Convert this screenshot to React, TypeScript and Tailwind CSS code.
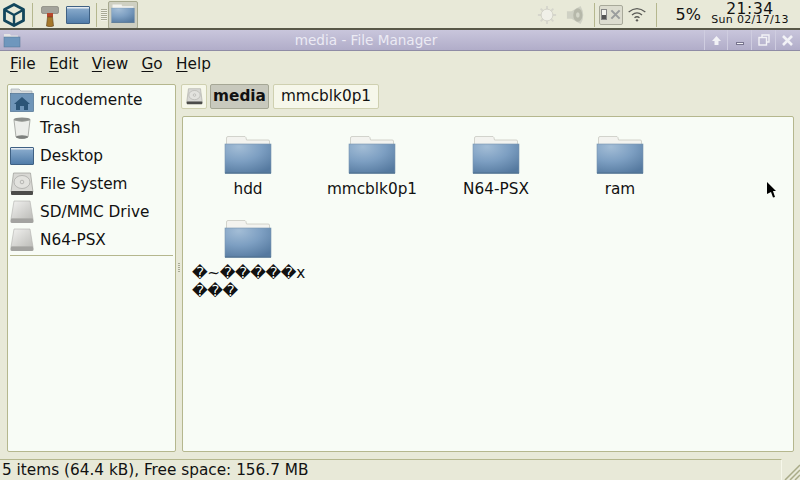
const FolderIcon = ({ size = 48 }: { size?: number }) => (
  <svg className="shrink-0" width={size} height={size} viewBox="0 0 48 48">
    <defs>
      <radialGradient id="fb" cx="0.3" cy="0.1" r="1">
        <stop offset="0" stopColor="#a3bdd6" />
        <stop offset="0.5" stopColor="#7d9fc2" />
        <stop offset="1" stopColor="#55799f" />
      </radialGradient>
    </defs>
    <path d="M2.500 10 V4 Q2.500 2.500 4 2.500 H21 Q22 2.500 22.500 6 H44 Q45.500 6 45.500 7 V12 H2.500 Z" fill="#f3f3ef" stroke="#c9c9c1" strokeWidth="0.8" />
    <rect x="1" y="10" width="46" height="29" fill="url(#fb)" stroke="#7894ae" strokeWidth="0.6" />
    <rect x="1" y="38.500" width="46" height="1.200" fill="#466a8c" />
  </svg>
);

const HomeIcon = () => (
  <svg width="24" height="24" viewBox="0 0 24 24">
    <path d="M1 8 V1 H9 L11 3 H22 V8 Z" fill="#d7dbdc" stroke="#a5adb2" strokeWidth="0.7" />
    <rect x="0.500" y="5.500" width="23" height="18" fill="#6f95b8" stroke="#4d7090" strokeWidth="0.7" />
    <path d="M12 9 L20 16 H18 V22 H14 V18 H10 V22 H6 V16 H4 Z" fill="#2c5577" />
  </svg>
);

const TrashIcon = () => (
  <svg width="24" height="24" viewBox="0 0 24 24">
    <ellipse cx="12" cy="3.500" rx="8.500" ry="2" fill="#8b8f8c" />
    <path d="M4 4 L6 21 Q12 24 18 21 L20 4 Q12 7 4 4 Z" fill="#eceeea" stroke="#9a9d98" strokeWidth="0.8" />
    <ellipse cx="12" cy="21" rx="6" ry="1.800" fill="#7d807d" />
  </svg>
);

const DesktopIcon = ({ size = 24, id = "db" }: { size?: number; id?: string }) => (
  <svg width={size} height={size} viewBox="0 0 24 24">
    <defs>
      <linearGradient id={id} x1="0" y1="0" x2="0" y2="1">
        <stop offset="0" stopColor="#8fb0d0" />
        <stop offset="1" stopColor="#4f7ba8" />
      </linearGradient>
    </defs>
    <rect x="0.500" y="3.500" width="23" height="17" rx="0.500" fill={`url(#${id})`} stroke="#3f6184" />
    <rect x="1" y="4" width="22" height="1.500" fill="#e4eaf0" />
  </svg>
);

const HarddiskIcon = ({ size = 24 }: { size?: number }) => (
  <svg width={size} height={size} viewBox="0 0 24 24">
    <path d="M3.500 1 H20.500 L23 20 H1 Z" fill="#d8d8d4" stroke="#9b9b96" strokeWidth="0.7" />
    <ellipse cx="12" cy="10" rx="8" ry="6.500" fill="#e2e2de" stroke="#a4a4a0" strokeWidth="0.7" />
    <circle cx="12" cy="10" r="1.800" fill="none" stroke="#a4a4a0" strokeWidth="0.7" />
    <rect x="1" y="19" width="22" height="4" rx="1" fill="#4c4c4a" />
  </svg>
);

const DriveIcon = () => (
  <svg width="24" height="24" viewBox="0 0 24 24">
    <defs>
      <linearGradient id="dr" x1="0" y1="0" x2="1" y2="1">
        <stop offset="0" stopColor="#f2f2f0" />
        <stop offset="1" stopColor="#bcbcb8" />
      </linearGradient>
    </defs>
    <path d="M4 1 H20 L23 19 H1 Z" fill="url(#dr)" stroke="#b0b0ac" strokeWidth="0.6" />
    <rect x="0.500" y="18.500" width="23" height="4.500" rx="1.500" fill="#a3a3a0" />
  </svg>
);

const places = [
  { name: "rucodemente", icon: <HomeIcon /> },
  { name: "Trash", icon: <TrashIcon /> },
  { name: "Desktop", icon: <DesktopIcon id="db2" /> },
  { name: "File System", icon: <HarddiskIcon /> },
  { name: "SD/MMC Drive", icon: <DriveIcon /> },
  { name: "N64-PSX", icon: <DriveIcon /> },
];

const menus = [
  { first: "F", rest: "ile" },
  { first: "E", rest: "dit" },
  { first: "V", rest: "iew" },
  { first: "G", rest: "o" },
  { first: "H", rest: "elp" },
];

const folders = ["hdd", "mmcblk0p1", "N64-PSX", "ram"];

const Panel = () => (
  <div className="h-[29px] flex items-center bg-[#e8e9d8] shrink-0">
    <svg className="ml-[2px]" width="24" height="26" viewBox="0 0 24 26" fill="none" stroke="#12465c" strokeWidth="2.800" strokeLinejoin="round">
      <path d="M12 2.500 L21.500 7.500 V18.500 L12 23.500 L2.500 18.500 V7.500 Z" />
      <path d="M3 8 L12 13 L21 8 M12 13 V23" strokeWidth="2.400" />
    </svg>
    <div className="ml-[6px] w-px h-[24px] bg-[#b5b78e]" />
    <svg className="ml-[8px]" width="18" height="24" viewBox="0 0 18 24">
      <rect x="0.500" y="3.500" width="17" height="7" rx="1.500" fill="#a3a39b" stroke="#77776f" strokeWidth="0.600" />
      <rect x="6" y="10" width="6" height="4" fill="#b5472c" />
      <path d="M6.500 14 H11.500 L12.500 23 Q9 24.500 5.500 23 Z" fill="#a5782b" stroke="#5e4218" strokeWidth="0.600" />
    </svg>
    <div className="ml-[7px]"><DesktopIcon size={24} /></div>
    <div className="ml-[6px] w-px h-[24px] bg-[#b5b78e]" />
    <div className="ml-[4px] w-[6px] h-[12px] bg-[repeating-linear-gradient(to_bottom,#a9aa96_0,#a9aa96_1px,#f2f2e8_1px,#f2f2e8_2px)]" />
    <div className="ml-[1px] w-[30px] h-[28px] flex items-center justify-center bg-[#cfd0c2] border border-[#a8aa90] rounded-[2px]">
      <FolderIcon size={24} />
    </div>
    <div className="ml-auto flex items-center">
      <svg width="20" height="20" viewBox="0 0 22 22">
        <g stroke="#d6d6cc" strokeWidth="2">
          <path d="M11 1 V21 M1 11 H21 M4 4 L18 18 M18 4 L4 18" />
        </g>
        <circle cx="11" cy="11" r="6.500" fill="#f0f0e8" stroke="#cfcfc5" />
      </svg>
      <svg className="ml-[9px]" width="20" height="20" viewBox="0 0 22 22">
        <path d="M1 7 H6 L16 1 Q22 11 16 21 L6 15 H1 Z" fill="#cfd1c4" />
        <ellipse cx="13" cy="11" rx="5" ry="7.500" fill="#b6b8aa" />
        <ellipse cx="13" cy="11" rx="2" ry="3" fill="#d4d6c9" />
      </svg>
      <div className="ml-[8px] w-px h-[24px] bg-[#b5b78e]" />
      <div className="ml-[4px] w-[24px] h-[20px] flex items-center justify-center gap-[3px] bg-[#dcdccf] border border-[#a8a99a] rounded-[2px]">
        <div className="w-[6px] h-[11px] border border-[#888] bg-[linear-gradient(to_bottom,#f4f4ee_50%,#555_50%)]" />
        <svg width="11" height="11" viewBox="0 0 16 16" stroke="#9a9d9d" strokeWidth="3">
          <path d="M2 2 L14 14 M14 2 L2 14" />
        </svg>
      </div>
      <svg className="ml-[4px]" width="20" height="17" viewBox="0 0 24 20" fill="none" stroke="#5a5a56" strokeWidth="1.600">
        <path d="M2 7 Q12 -1 22 7 M6 10.500 Q12 5.500 18 10.500 M9 14 Q12 11.500 15 14" />
        <circle cx="12" cy="17" r="1.400" fill="#5a5a56" stroke="none" />
      </svg>
      <div className="ml-[9px] w-px h-[24px] bg-[#b5b78e]" />
      <span className="ml-[19px] text-[16px] leading-none">5%</span>
      <div className="ml-[3px] w-[92px] mr-[4px] mb-[2px] flex flex-col items-center">
        <span className="text-[15.500px] leading-[12px] tracking-[0.6px]">21:34</span>
        <span className="text-[11px] leading-[10px] tracking-[0.3px] whitespace-nowrap">Sun 02/17/13</span>
      </div>
    </div>
  </div>
);

const TitleBar = () => (
  <div className="h-[20px] flex items-center shrink-0 border-t-2 border-[#585848] bg-[linear-gradient(to_bottom,#c9c6dc,#b1adc9)] border-b border-b-[#8f8ca5] box-content -mt-px">
    <div className="ml-[3px]">
      <svg width="18" height="16" viewBox="0 0 18 16">
        <path d="M1 5 V2 H7 L8 3.500 H15 V6 H1 Z" fill="#e4e4e4" />
        <rect x="1" y="5" width="16" height="10" fill="#6f97bd" stroke="#507392" strokeWidth="0.500" />
      </svg>
    </div>
    <div className="flex-1 text-center text-[13.600px] text-[#ecebf4] pl-[7px] pt-[1px]">media - File Manager</div>
    <div className="flex items-center h-full mr-[1px]">
      <div className="w-[23px] h-full flex items-center justify-center border-l border-[#cfcde0]">
        <svg width="11" height="11" viewBox="0 0 11 11" fill="#f2f2f6"><path d="M5.500 1 L10 6 H7.500 V10 H3.500 V6 H1 Z" /></svg>
      </div>
      <div className="w-[24px] h-full flex items-center justify-center border-l border-[#cfcde0]">
        <div className="w-[8px] h-[3px] bg-[#f2f2f6] border border-[#77748e] mt-[6px]" />
      </div>
      <div className="w-[24px] h-full flex items-center justify-center border-l border-[#cfcde0]">
        <svg width="12" height="12" viewBox="0 0 12 12" fill="none" stroke="#f2f2f6" strokeWidth="1.400"><path d="M4 3 V1 H11 V8 H8.500" /><rect x="1" y="3.500" width="7.500" height="7.500" /></svg>
      </div>
      <div className="w-[24px] h-full flex items-center justify-center border-l border-[#cfcde0]">
        <svg width="11" height="11" viewBox="0 0 11 11" stroke="#f2f2f6" strokeWidth="2.600"><path d="M1 1 L10 10 M10 1 L1 10" /></svg>
      </div>
    </div>
  </div>
);

export default function App() {
  return (
    <div className="relative w-[800px] h-[480px] overflow-hidden flex flex-col bg-[#e8e9d8] text-[#111] font-['DejaVu_Sans',sans-serif]">
      <Panel />
      <TitleBar />

      {/* menu bar */}
      <div className="h-[27px] flex items-center gap-[13.300px] pl-[10px] text-[15.300px] shrink-0">
        {menus.map((m) => (
          <span key={m.first}><span className="underline underline-offset-2">{m.first}</span>{m.rest}</span>
        ))}
      </div>

      {/* body */}
      <div className="flex-1 flex min-h-0 pl-[7px] pr-[6px] pt-[6px] pb-[7px]">
        <div className="w-[169px] shrink-0 bg-[#f8fcf6] border border-[#b5b78e] rounded-[2px] pt-[1px] px-[1px] flex flex-col">
          {places.map((p) => (
            <div key={p.name} className="h-[28px] flex items-center gap-[6px] pl-[1px] text-[15.300px]">
              {p.icon}
              <span>{p.name}</span>
            </div>
          ))}
          <div className="mt-[1px] h-px bg-[#b5b78e] mx-px" />
        </div>

        <div className="w-[6px] shrink-0 flex items-center justify-center">
          <div className="w-[2px] h-[10px] bg-[repeating-linear-gradient(to_bottom,#a9aa96_0,#a9aa96_1px,transparent_1px,transparent_2px)]" />
        </div>

        <div className="flex-1 flex flex-col min-w-0">
          <div className="h-[25px] flex shrink-0 -ml-px">
            <div className="w-[26px] flex items-center justify-center bg-[#f6f7ea] border border-[#cfd0b0] rounded-[2px]">
              <HarddiskIcon size={17} />
            </div>
            <div className="ml-[3px] w-[59px] flex items-center justify-center bg-[#c8c9bd] border border-[#a5a795] rounded-[2px] text-[15.300px] font-bold">media</div>
            <div className="ml-[4px] w-[106px] flex items-center justify-center bg-[#f6f7ea] border border-[#cfd0b0] rounded-[2px] text-[15.300px]">mmcblk0p1</div>
          </div>
          <div className="flex-1 mt-[7px] bg-[#f8fcf6] border border-[#b5b78e] rounded-[2px] pl-[3px] pt-[17px]">
            <div className="grid grid-cols-[repeat(4,124px)] auto-rows-[84px]">
              {folders.map((f) => (
                <div key={f} className="flex flex-col items-center text-[15.300px] leading-[17px]">
                  <FolderIcon />
                  <span className="mt-[-5px] pt-[4px]">{f}</span>
                </div>
              ))}
              <div className="flex flex-col items-center text-[15.300px] leading-[18px]">
                <FolderIcon />
                <span className="mt-[-5px] pt-[3px] w-[112px] whitespace-nowrap tracking-[-0.4px]">{"\uFFFD~\uFFFD\uFFFD\uFFFD\uFFFD\uFFFDx"}<br />{"\uFFFD\uFFFD\uFFFD"}</span>
              </div>
            </div>
          </div>
        </div>
      </div>

      {/* status bar */}
      <div className="h-[21px] flex shrink-0">
        <div className="w-[782px] pl-[2px] flex items-center text-[15.300px] border-t border-[#b5b78e] border-r border-r-[#f6f7ea]">5 items (64.4 kB), Free space: 156.7 MB</div>
        <svg className="self-end" width="18" height="18" viewBox="0 0 18 18" stroke="#a9ab88" strokeWidth="1.500">
          <path d="M18 3 L3 18 M18 8 L8 18 M18 13 L13 18" />
        </svg>
      </div>

      {/* mouse pointer */}
      <svg className="absolute left-[767px] top-[182px]" width="10" height="16" viewBox="0 0 10 16" fill="#000">
        <path d="M0 0 L9 9 H6 L8 15 L6 15.500 L4 10 L0 12 Z" />
      </svg>
    </div>
  );
}
